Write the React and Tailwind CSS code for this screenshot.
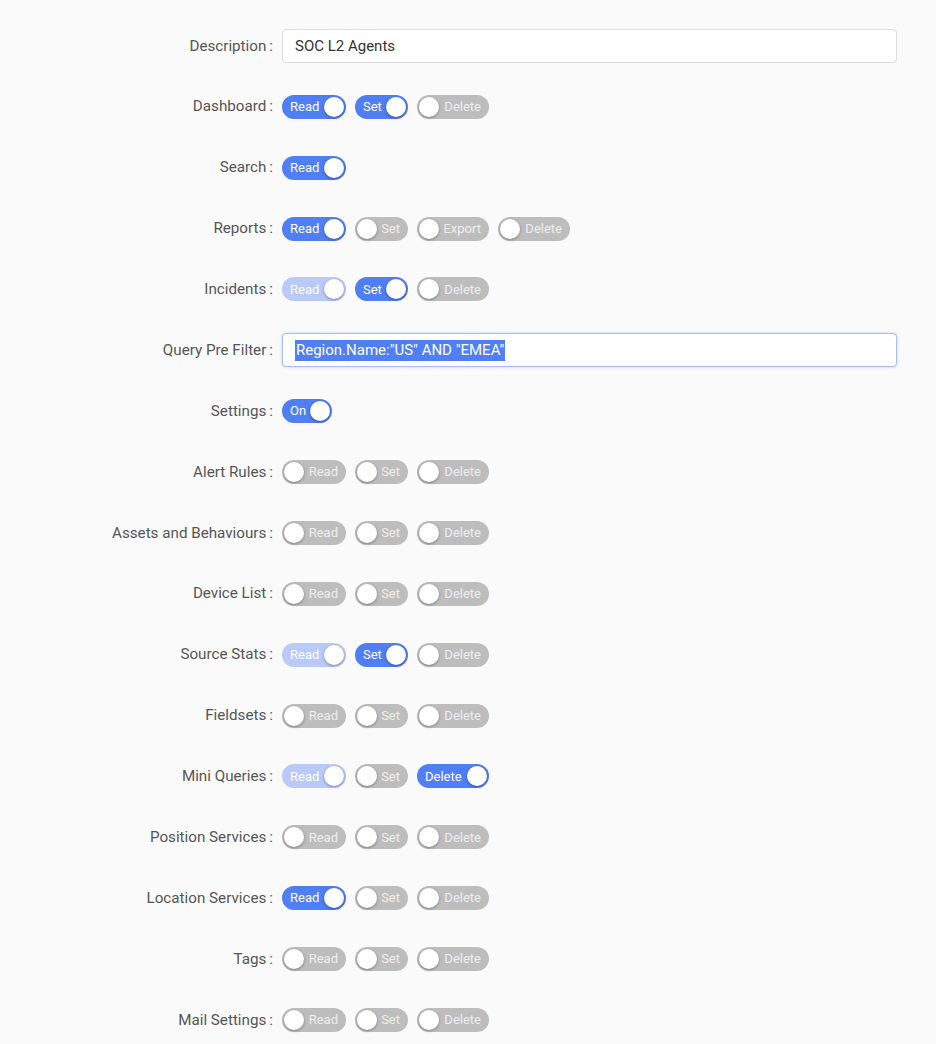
import React from 'react';

const widths = { Read: 'w-[64px]', Set: 'w-[53px]', Delete: 'w-[72px]', Export: 'w-[72px]', On: 'w-[50px]' };

// state: 'on' | 'off' | 'dim'
const Toggle = ({ label, state }) => {
  const knob = <span className="h-[20px] w-[20px] shrink-0 rounded-full bg-white shadow-[0_1px_3px_rgba(0,0,0,0.35)]" />;
  if (state === 'off') {
    return (
      <div className={`flex h-[24px] items-center justify-between rounded-full bg-[#bdbdbd] pl-[2px] pr-[8px] ${widths[label]}`}>
        {knob}
        <span className="text-[13px] text-[#eeeeee]">{label}</span>
      </div>
    );
  }
  const bg = state === 'on' ? 'bg-[#4f7ef5]' : 'bg-[#b9caf8]';
  return (
    <div className={`flex h-[24px] items-center justify-between rounded-full pl-[8px] pr-[2px] ${bg} ${widths[label]}`}>
      <span className="text-[13px] text-white">{label}</span>
      {knob}
    </div>
  );
};

const rows = [
  { label: 'Description', input: 'SOC L2 Agents' },
  { label: 'Dashboard', toggles: [['Read', 'on'], ['Set', 'on'], ['Delete', 'off']] },
  { label: 'Search', toggles: [['Read', 'on']] },
  { label: 'Reports', toggles: [['Read', 'on'], ['Set', 'off'], ['Export', 'off'], ['Delete', 'off']] },
  { label: 'Incidents', toggles: [['Read', 'dim'], ['Set', 'on'], ['Delete', 'off']] },
  { label: 'Query Pre Filter', query: 'Region.Name:"US" AND "EMEA"' },
  { label: 'Settings', toggles: [['On', 'on']] },
  { label: 'Alert Rules', toggles: [['Read', 'off'], ['Set', 'off'], ['Delete', 'off']] },
  { label: 'Assets and Behaviours', toggles: [['Read', 'off'], ['Set', 'off'], ['Delete', 'off']] },
  { label: 'Device List', toggles: [['Read', 'off'], ['Set', 'off'], ['Delete', 'off']] },
  { label: 'Source Stats', toggles: [['Read', 'dim'], ['Set', 'on'], ['Delete', 'off']] },
  { label: 'Fieldsets', toggles: [['Read', 'off'], ['Set', 'off'], ['Delete', 'off']] },
  { label: 'Mini Queries', toggles: [['Read', 'dim'], ['Set', 'off'], ['Delete', 'on']] },
  { label: 'Position Services', toggles: [['Read', 'off'], ['Set', 'off'], ['Delete', 'off']] },
  { label: 'Location Services', toggles: [['Read', 'on'], ['Set', 'off'], ['Delete', 'off']] },
  { label: 'Tags', toggles: [['Read', 'off'], ['Set', 'off'], ['Delete', 'off']] },
  { label: 'Mail Settings', toggles: [['Read', 'off'], ['Set', 'off'], ['Delete', 'off']] },
];

const App = () => {
  return (
    <div className="min-h-[1044px] bg-[#fafafa] pt-[15.5px] font-['Roboto',sans-serif]">
      {rows.map((row) => (
        <div key={row.label} className="flex h-[60.875px] items-center">
          <div className="w-[273px] shrink-0 text-right text-[15.2px] text-[#555555]">
            {row.label}
            <span className="ml-[3px]">:</span>
          </div>
          <div className="ml-[9px] flex items-center gap-[9px]">
            {row.input && (
              <div className="flex h-[34px] w-[615px] items-center rounded-[4px] border border-[#dcdcdc] bg-white pl-[12px] text-[15px] text-[#333333]">
                {row.input}
              </div>
            )}
            {row.query && (
              <div className="flex h-[34px] w-[615px] items-center rounded-[4px] border border-[#a9bdf0] bg-white pl-[12px] text-[15px] shadow-[0_0_3px_rgba(80,126,245,0.35)]">
                <span className="bg-[#4f7ef5] px-px leading-[21px] text-white">{row.query}</span>
              </div>
            )}
            {row.toggles &&
              row.toggles.map(([t, s]) => <Toggle key={t} label={t} state={s} />)}
          </div>
        </div>
      ))}
    </div>
  );
};

export default App;
